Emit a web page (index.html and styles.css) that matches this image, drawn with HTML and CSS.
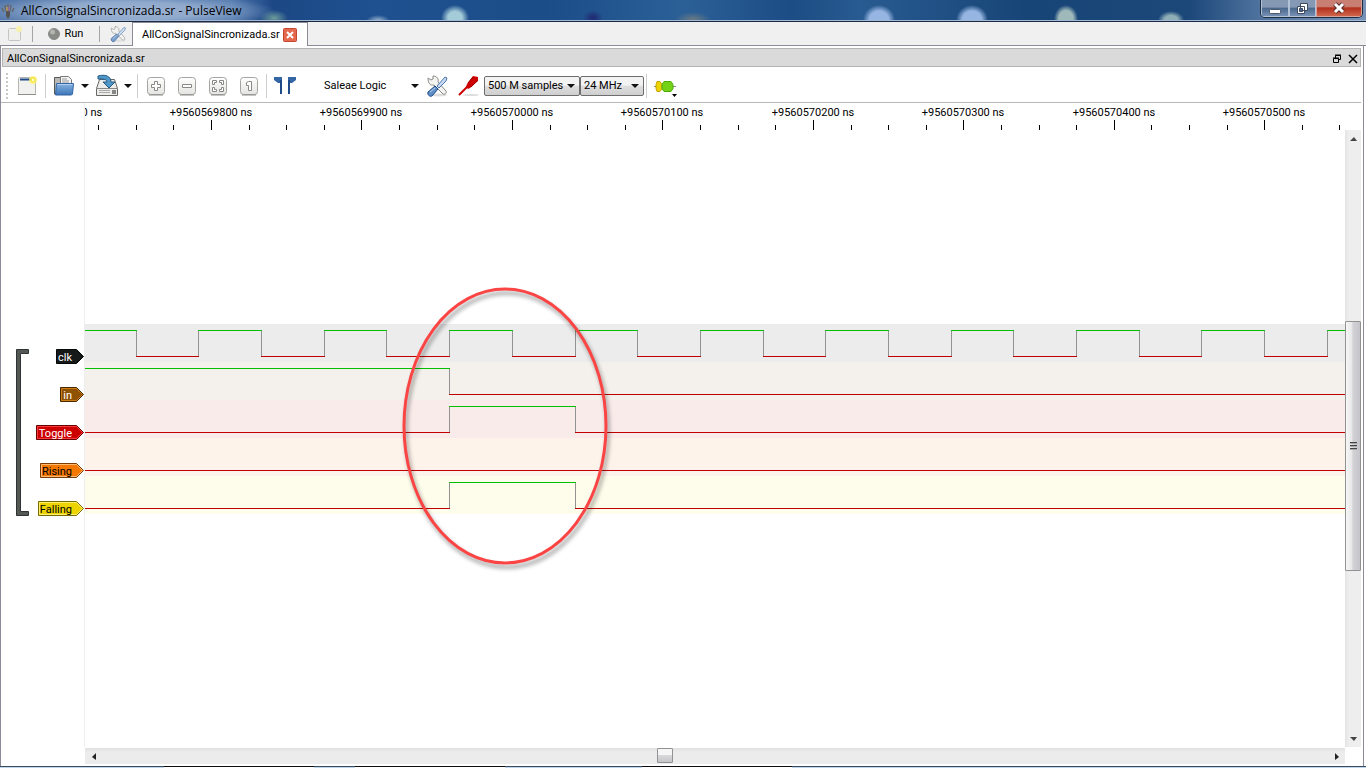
FILE: index.html
```html
<!DOCTYPE html>
<html lang="es">
<head>
<meta charset="utf-8">
<title>AllConSignalSincronizada.sr - PulseView</title>
<link rel="stylesheet" href="styles.css">
</head>
<body>
<svg class="defs" aria-hidden="true">
  <defs>
    <linearGradient id="blue" x1="0" y1="0" x2="0" y2="1"><stop offset="0" stop-color="#86b3e0"/><stop offset="1" stop-color="#3c76b8"/></linearGradient>
    <linearGradient id="key" x1="0" y1="0" x2="0" y2="1"><stop offset="0" stop-color="#fff"/><stop offset="1" stop-color="#e4e4e0"/></linearGradient>
    <symbol id="page" viewBox="0 0 24 24">
      <rect x="3.500" y="3.500" width="17" height="17" rx="1" fill="#f1f1ef" stroke="#b4b4b0"/>
      <path d="M3 20.500h18" stroke="#8d8d89"/>
      <path d="M5 5.500h13" stroke="#204a87" stroke-width="2"/>
      <circle cx="18" cy="6" r="4" fill="#fcf36a" opacity=".8"/><circle cx="18" cy="6" r="2" fill="#fffbd0" stroke="#f4e526"/>
    </symbol>
    <symbol id="page-small" viewBox="0 0 18 18">
      <rect x="3.500" y="3.500" width="12" height="12" rx="1" fill="#efefed" stroke="#9a9a96"/>
      <circle cx="14" cy="4" r="3" fill="#fcf36a"/>
    </symbol>
    <symbol id="tools" viewBox="0 0 24 24">
      <ellipse cx="13" cy="21" rx="9" ry="1.500" fill="#ddd"/>
      <path d="M3 4l3 2 2-1V2c4 0 6 3 5 6l8 9c1 2-1 4-3 3l-9-9c-4 1-6-2-6-7z" fill="#f3f3f1" stroke="#888a85"/>
      <path d="M20 3l2 1-1 3-7 7-2-2z" fill="#c9daf0" stroke="#4a76ad"/>
      <path d="M10 12l3 3-6 7c-2 1-5-1-4-4z" fill="#5f8fc8" stroke="#204a87"/>
      <path d="M5 18l5-4" stroke="#b7d0ec"/>
    </symbol>
    <symbol id="down" viewBox="0 0 8 4"><path d="M0 0h8L4 4z" fill="#111"/></symbol>
  </defs>
</svg>

<header class="titlebar">
  <svg class="app-icon" viewBox="0 0 16 16"><path d="M6 8h4v5l-2 3-2-3z" fill="#545454"/><path d="M4 9L2 5M6 8L5 2M8 8V1M10 8l1-6M12 9l2-4" stroke="#666" stroke-width="1.500"/><path d="M7 8V4" stroke="#e6b13a"/><path d="M9 8V4" stroke="#ae65bd"/></svg>
  <h1>AllConSignalSincronizada.sr - PulseView</h1>
  <div class="window-buttons">
    <button class="minimize" aria-label="Minimize"><svg width="12" height="12" viewBox="0 0 12 12"><rect x=".5" y="7.500" width="11" height="4" rx="1" fill="#fff" stroke="#4c596d"/></svg></button>
    <button class="restore" aria-label="Restore"><svg width="13" height="13" viewBox="0 0 13 13"><path d="M4.500 1.500h7v7h-7zM1.500 4.500h7v7h-7z" fill="#fff" stroke="#3d4a5f"/><path d="M3.500 6.500h3v3h-3z" fill="#46658e" stroke="#3d4a5f"/></svg></button>
    <button class="close" aria-label="Close"><svg width="14" height="12" viewBox="0 0 14 12"><path d="M3 2l8 8M11 2l-8 8" stroke="#552b2a" stroke-width="5"/><path d="M3 2l8 8M11 2l-8 8" stroke="#fff" stroke-width="3"/></svg></button>
  </div>
</header>

<nav class="sessions">
  <button class="session-new" aria-label="New session"><svg class="faded" width="18" height="18"><use href="#page-small"/></svg></button>
  <i class="sep"></i>
  <button class="run"><svg width="12" height="12" viewBox="0 0 12 12"><circle cx="6" cy="6" r="5.500" fill="#888a85" stroke="#8a8a8a"/><circle cx="4.500" cy="4" r="2.500" fill="#b4b5b1"/></svg>Run</button>
  <i class="sep"></i>
  <button class="session-settings" aria-label="Settings"><svg class="dim" width="18" height="18"><use href="#tools"/></svg></button>
  <div class="tab"><span>AllConSignalSincronizada.sr</span>
    <button aria-label="Close tab"><svg width="14" height="14" viewBox="0 0 14 14"><rect x=".5" y=".5" width="13" height="13" rx="1" fill="#e4694d" stroke="#c4472f"/><path d="M4 4l6 6M10 4l-6 6" stroke="#fff" stroke-width="2"/></svg></button>
  </div>
</nav>

<main class="session">
  <div class="dock-title">
    <h2>AllConSignalSincronizada.sr</h2>
    <button aria-label="Float"><svg width="10" height="10" viewBox="0 0 10 10"><path d="M3.500 4V1.500h5v4H7M3 1h6M1.500 4.500h5v4h-5zM1 4h6" fill="none" stroke="#000"/></svg></button>
    <button aria-label="Close"><svg width="10" height="10" viewBox="0 0 10 10"><path d="M1 1l8 8M9 1L1 9" stroke="#000" stroke-width="1.500"/></svg></button>
  </div>

  <div class="toolbar">
    <i class="handle"></i>
    <button class="wide" aria-label="New"><svg width="24" height="24"><use href="#page"/></svg></button>
    <i class="sep"></i>
    <button class="file" aria-label="Open"><svg width="24" height="24" viewBox="0 0 24 24"><path d="M2.500 20V3.500h6l1 2h9V20z" fill="#b9bab7" stroke="#555753"/><path d="M8.500 12V2.500h8l3 3V12z" fill="#f4f4f3" stroke="#777"/><path d="M10 5h5M10 7h7M10 9h7" stroke="#999"/><path d="M4.500 9.500h17l-1 10.500-1 1h-16z" fill="url(#blue)" stroke="#3465a4"/><path d="M5.500 10.500h15" stroke="#b1cfee"/></svg></button>
    <button class="arrow" aria-label="Open recent"><svg width="8" height="4"><use href="#down"/></svg></button>
    <button class="file save" aria-label="Save"><svg width="24" height="24" viewBox="0 0 24 24"><path d="M4.500 5.500h15l3 9v7h-21v-7z" fill="#ececea" stroke="#666864"/><path d="M2 14.500h20" stroke="#888"/><path d="M4 16.500h11M4 18.500h11" stroke="#aaa"/><path d="M18 16v4M20 16v4" stroke="#222"/><path d="M3 2c7-2 13 0 13 6h4l-6 6-6-6h4c0-3-4-3-9-3z" fill="#4f96c9" stroke="#245a86"/></svg></button>
    <button class="arrow" aria-label="Save options"><svg width="8" height="4"><use href="#down"/></svg></button>
    <i class="sep spaced"></i>
    <button class="zoom first" aria-label="Zoom in"><svg width="20" height="20" viewBox="0 0 20 20"><rect x="1.500" y="1.500" width="17" height="17" rx="3" fill="url(#key)" stroke="#a3a5a0"/><path d="M3 19h14" stroke="#8b8d88"/><path d="M8.500 5.500h3v3h3v3h-3v3h-3v-3h-3v-3h3z" fill="#fff" stroke="#888a85"/></svg></button>
    <button class="zoom" aria-label="Zoom out"><svg width="20" height="20" viewBox="0 0 20 20"><rect x="1.500" y="1.500" width="17" height="17" rx="3" fill="url(#key)" stroke="#a3a5a0"/><path d="M3 19h14" stroke="#8b8d88"/><path d="M5.500 8.500h9v3h-9z" fill="#fff" stroke="#888a85"/></svg></button>
    <button class="zoom" aria-label="Zoom to fit"><svg width="20" height="20" viewBox="0 0 20 20"><rect x="1.500" y="1.500" width="17" height="17" rx="3" fill="url(#key)" stroke="#a3a5a0"/><path d="M3 19h14" stroke="#8b8d88"/><path d="M4.500 4.500h4v2h-2v2h-2zM15.500 4.500h-4v2h2v2h2zM4.500 15.500h4v-2h-2v-2h-2zM15.500 15.500h-4v-2h2v-2h2z" fill="#fff" stroke="#888a85"/></svg></button>
    <button class="zoom" aria-label="Zoom one to one"><svg width="20" height="20" viewBox="0 0 20 20"><rect x="1.500" y="1.500" width="17" height="17" rx="3" fill="url(#key)" stroke="#a3a5a0"/><path d="M3 19h14" stroke="#8b8d88"/><path d="M9.500 5.500h3v9h-3v-5h-2v-3z" fill="#fff" stroke="#888a85"/></svg></button>
    <i class="sep spaced"></i>
    <button class="wide" aria-label="Show cursors"><svg width="24" height="20" viewBox="0 0 24 20"><path d="M1 1h8v17H8V7H5L1 4zM15 1h8v3l-4 3h-3v11h-1z" fill="#3465a4"/><path d="M7 4h2v14H7zM15 4h2v14h-2z" fill="#204a87"/></svg></button>
    <button class="device"><span>Saleae Logic</span><svg width="8" height="4"><use href="#down"/></svg></button>
    <button class="file" aria-label="Configure device"><svg width="24" height="24"><use href="#tools"/></svg></button>
    <button class="probe" aria-label="Configure channels"><svg width="24" height="24" viewBox="0 0 24 24"><ellipse cx="15" cy="21" rx="8" ry="1" fill="#ddd"/><path d="M3 21l10-10" stroke="#cc0000" stroke-width="2"/><path d="M17 2l5 1v4l-8 7-2 1-2-2 1-3z" fill="#cc0000"/><path d="M17 3l-5 6M21 7l-6 6" stroke="#a40000"/></svg></button>
    <div class="select samples"><select aria-label="Sample count"><option>500 M samples</option></select><svg width="8" height="4"><use href="#down"/></svg></div>
    <div class="select rate"><select aria-label="Sample rate"><option>24 MHz</option></select><svg width="8" height="4"><use href="#down"/></svg></div>
    <i class="sep spaced"></i>
    <button class="wide" aria-label="Add decoder"><svg width="24" height="24" viewBox="0 0 24 24"><path d="M1 12.500h22" stroke="#888"/><path d="M4 7.500h3l2 3v4l-2 3H4l-1-3v-4z" fill="#edd400" stroke="#c4a000"/><path d="M11 7.500h7l2 3v4l-2 3h-7l-2-3v-4z" fill="#73d216" stroke="#4eaa06"/><path d="M19 20h5l-2.500 3z" fill="#000"/></svg></button>
  </div>

  <div class="view">
    <svg class="channels" viewBox="0 0 83 645" width="83" height="645">
      <path d="M27.500 246.500h-12v166h12v-4h-8v-158h8z" fill="#555753" stroke="#2e3436"/>
      <g class="shapes">
        <path d="M55.500 246.500h20l7 7-7 7h-20z" fill="#16191a" stroke="#060808"/>
        <path d="M59.500 284.500h16l7 7-7 7h-16z" fill="#8f5202" stroke="#472901"/><path d="M60.500 285.500h15l6 6-6 6h-15z" fill="none" stroke="#cf7d12"/>
        <path d="M35.500 322.500h40l7 7-7 7h-40z" fill="#cc0000" stroke="#660000"/><path d="M36.500 323.500h39l6 6-6 6h-39z" fill="none" stroke="#ff3a3a"/>
        <path d="M39.500 360.500h36l7 7-7 7h-36z" fill="#f57900" stroke="#7a3c00"/><path d="M40.500 361.500h35l6 6-6 6h-35z" fill="none" stroke="#ffb970"/>
        <path d="M37.500 398.500h38l7 7-7 7h-38z" fill="#edd400" stroke="#766a00"/><path d="M38.500 399.500h37l6 6-6 6h-37z" fill="none" stroke="#fff06a"/>
      </g>
      <g class="names" text-anchor="end">
        <text class="light" x="71" y="258">clk</text>
        <text class="light" x="71" y="296">in</text>
        <text class="light" x="71" y="334">Toggle</text>
        <text x="71" y="372">Rising</text>
        <text x="71" y="410">Falling</text>
      </g>
    </svg>

    <div class="plot">
      <svg class="ruler">
        <path d="M13.500 22v5M51.500 22v5M88.500 22v5M126.500 17v10M164.500 22v5M201.500 22v5M239.500 22v5M276.500 17v10M314.500 22v5M352.500 22v5M389.500 22v5M427.500 17v10M465.500 22v5M502.500 22v5M540.500 22v5M577.500 17v10M615.500 22v5M653.500 22v5M690.500 22v5M728.500 17v10M766.500 22v5M803.500 22v5M841.500 22v5M878.500 17v10M916.500 22v5M954.500 22v5M991.500 22v5M1029.500 17v10M1066.500 22v5M1104.500 22v5M1142.500 22v5M1179.500 17v10M1217.500 22v5M1254.500 22v5" stroke="#000"/>
        <g text-anchor="middle">
          <text x="-24" y="13">+9560569700 ns</text>
          <text x="126" y="13">+9560569800 ns</text>
          <text x="276" y="13">+9560569900 ns</text>
          <text x="427" y="13">+9560570000 ns</text>
          <text x="577" y="13">+9560570100 ns</text>
          <text x="728" y="13">+9560570200 ns</text>
          <text x="878" y="13">+9560570300 ns</text>
          <text x="1029" y="13">+9560570400 ns</text>
          <text x="1179" y="13">+9560570500 ns</text>
        </g>
      </svg>
      <svg class="traces">
        <g class="bands">
          <rect y="194" width="100%" height="38" fill="#ececec"/>
          <rect y="232" width="100%" height="38" fill="#f4f0eb"/>
          <rect y="270" width="100%" height="38" fill="#faebeb"/>
          <rect y="308" width="100%" height="38" fill="#fef3eb"/>
          <rect y="346" width="100%" height="38" fill="#fefdeb"/>
        </g>
        <path class="edge" d="M51.500 200v27M113.500 200v27M176.500 200v27M239.500 200v27M301.500 200v27M364.500 200v27M427.500 200v27M490.500 200v27M552.500 200v27M615.500 200v27M678.500 200v27M740.500 200v27M803.500 200v27M866.500 200v27M928.500 200v27M991.500 200v27M1054.500 200v27M1116.500 200v27M1179.500 200v27M1242.500 200v27M364.500 238v27M364.500 276v27M490.500 276v27M364.500 352v27M490.500 352v27"/>
        <path class="high" d="M0 200.500h52M113 200.500h64M239 200.500h63M364 200.500h64M490 200.500h63M615 200.500h64M740 200.500h64M866 200.500h63M991 200.500h64M1116 200.500h64M1242 200.500h4000M0 238.500h365M364 276.500h127M364 352.500h127"/>
        <path class="low" d="M51 226.500h63M176 226.500h64M301 226.500h64M427 226.500h64M552 226.500h64M678 226.500h63M803 226.500h64M928 226.500h64M1054 226.500h63M1179 226.500h64M364 264.500h4000M0 302.500h365M490 302.500h4000M0 340.500h4000M0 378.500h365M490 378.500h4000"/>
        <ellipse class="mark" cx="420" cy="296" rx="101" ry="137"/>
      </svg>
    </div>

    <div class="vscroll">
      <button aria-label="Scroll up"><svg width="7" height="4" viewBox="0 0 7 4"><path d="M0 4h7L4 0z" fill="#444"/></svg></button>
      <div class="track"><div class="thumb"><svg width="7" height="8" viewBox="0 0 7 8"><path d="M0 .5h7M0 3.500h7M0 6.500h7" stroke="#444"/><path d="M0 1.500h7M0 4.500h7M0 7.500h7" stroke="#aaa"/></svg></div></div>
      <button aria-label="Scroll down"><svg width="7" height="4" viewBox="0 0 7 4"><path d="M0 0h7L4 4z" fill="#444"/></svg></button>
    </div>

    <div class="hscroll">
      <button aria-label="Scroll left"><svg width="4" height="7" viewBox="0 0 4 7"><path d="M4 0v7L0 4z" fill="#222"/></svg></button>
      <div class="track"><div class="thumb"></div></div>
      <button aria-label="Scroll right"><svg width="4" height="7" viewBox="0 0 4 7"><path d="M0 0v7l4-3z" fill="#222"/></svg></button>
    </div>
  </div>
</main>
<footer class="taskbar-edge"></footer>
</body>
</html>
```
FILE: styles.css
```css
* { box-sizing: border-box; }

html { height: 100%; }

body {
  height: 100%;
  margin: 0;
  display: flex;
  flex-direction: column;
  overflow: hidden;
  background: #fff;
  color: #000;
  font-family: Roboto, "Liberation Sans", sans-serif;
  font-size: 11px;
  line-height: 14px;
}

h1, h2 { margin: 0; font: inherit; }

button, select {
  margin: 0;
  padding: 0;
  border: 0;
  background: none;
  color: inherit;
  font: inherit;
}

button {
  display: flex;
  align-items: center;
  justify-content: center;
  flex: none;
}

svg { display: block; flex: none; }

.defs { position: absolute; width: 0; height: 0; }

.titlebar {
  flex: none;
  height: 22px;
  display: flex;
  align-items: flex-start;
  border-bottom: 1px solid #1b2a44;
  box-shadow: inset 0 -1px #a3b8d2;
  background:
    radial-gradient(ellipse 150px 18px at 126px 11px, #9fb5d4 0, #8fa9cc 50%, transparent 100%),
    radial-gradient(ellipse 14px 8px at 274px 18px, #6f9d9a, transparent),
    radial-gradient(ellipse 14px 13px at 455px 18px, #a4cbd8 50%, transparent),
    radial-gradient(ellipse 12px 6px at 378px 21px, #a5bfd4, transparent),
    radial-gradient(ellipse 10px 8px at 593px 18px, #202f78 20%, transparent),
    radial-gradient(ellipse 18px 8px at 693px 20px, #6f7b82, transparent),
    radial-gradient(ellipse 16px 15px at 879px 20px, #96b5e2 60%, transparent),
    radial-gradient(ellipse 16px 15px at 972px 20px, #96b5e2 60%, transparent),
    radial-gradient(ellipse 12px 14px at 1066px 19px, #9fb9bb 60%, transparent),
    radial-gradient(ellipse 13px 9px at 1171px 20px, #8faeb6 50%, transparent),
    linear-gradient(90deg, #4f74a8 0, #4d75ac 17%, #1c4885 20%, #1f5190 28%, #1b4d88 40%, #2b6097 50%, #1c4d84 58%, #285b91 63%, #184577 75%, #1b4779 87%, #4d719d 92%, #7792b6 100%);
}

.app-icon { width: 16px; height: 16px; margin: 3px 5px 0 0; }

.titlebar h1 {
  flex: 1;
  padding-top: 2px;
  font-family: "Open Sans", "Noto Sans", sans-serif;
  font-size: 12px;
  line-height: 17px;
}

.window-buttons {
  display: flex;
  height: 18px;
  margin-right: 3px;
  border: 1px solid #1f2c40;
  border-top: 0;
  border-radius: 0 0 5px 5px;
  overflow: hidden;
}

.window-buttons button {
  height: 17px;
  border: 1px solid #b2c2d6;
  border-top: 0;
  background: linear-gradient(#8599b4 0 45%, #4a678d 50%, #7590b3);
}

.window-buttons .minimize { width: 28px; }
.window-buttons .restore { width: 27px; }
.window-buttons .close { width: 46px; border-color: #d7a29c; background: linear-gradient(#c87e73 0 40%, #b3301d 50%, #d0644b); }

.sessions {
  flex: none;
  height: 24px;
  display: flex;
  align-items: center;
  background: #f0f0f0;
  border-bottom: 1px solid #8a8a98;
}

.session-new { width: 32px; padding-right: 4px; }
.sessions .sep { height: 16px; background: #a5a5a5; }
.run { width: 66px; padding-right: 1px; gap: 5px; }
.session-settings { width: 32px; padding-left: 4px; }
.faded { opacity: .5; }
.dim { opacity: .8; }
.sep { flex: none; width: 1px; height: 24px; background: #cfcfcf; }
.sep.spaced { margin-left: 2px; }

.tab {
  display: flex;
  align-items: center;
  align-self: stretch;
  gap: 3px;
  margin-bottom: -1px;
  padding: 0 10px 0 9px;
  border: 1px solid #8a8a98;
  border-bottom: 0;
  background: #fff;
}

.session {
  flex: 1;
  min-height: 0;
  display: flex;
  flex-direction: column;
  margin-right: 2px;
  padding: 2px 2px 2px 0;
  border: solid #8a8a98;
  border-width: 0 1px;
}

.dock-title {
  flex: none;
  height: 19px;
  display: flex;
  align-items: center;
  gap: 6px;
  margin-left: 1px;
  padding: 2px 2px 0 4px;
  border: 1px solid #b4b4b4;
  background: #dadada;
}

.dock-title h2 { flex: 1; }

.toolbar {
  flex: none;
  height: 36px;
  display: flex;
  align-items: center;
  padding-top: 2px;
  border-bottom: 1px solid #b8b8b8;
}

.handle { width: 2px; height: 26px; margin: 0 1px 0 5px; background: repeating-linear-gradient(#c8c8c8 0 2px, transparent 2px 4px); }
.wide { width: 36px; }
.file { width: 28px; }
.sep + .file { margin-left: 4px; }
.save { margin-left: 1px; }
.arrow { width: 14px; }
.zoom { width: 31px; }
.zoom.first { margin-left: 2px; }
.device { width: 120px; justify-content: space-between; padding: 0 4px 0 21px; }
.probe { width: 33px; }

.select {
  display: grid;
  align-items: center;
  height: 20px;
  border: 1px solid #6e6e6e;
  border-radius: 2px;
  background: linear-gradient(#f3f3f3 0 45%, #dedede 50%, #cfcfcf);
}

.select select { grid-area: 1 / 1; width: 100%; padding-left: 3px; appearance: none; }
.select svg { grid-area: 1 / 1; justify-self: end; margin-right: 4px; pointer-events: none; }
.samples { width: 96px; }
.rate { width: 64px; }

.view {
  flex: 1;
  min-height: 0;
  display: grid;
  grid-template-columns: 83px 1fr 16px;
  grid-template-rows: 1fr 17px;
}

.channels { grid-area: 1 / 1 / 3 / 2; }
.light { fill: #fff; }

.plot {
  display: flex;
  flex-direction: column;
  min-width: 0;
  border-left: 1px solid #eee;
}

.ruler { width: 100%; height: 27px; }
.traces { width: 100%; flex: 1; min-height: 0; }
.edge { stroke: #929292; fill: none; }
.high { stroke: #00c000; fill: none; }
.low { stroke: #c00000; fill: none; }
.mark { fill: none; stroke: #fb4545; stroke-width: 3px; filter: drop-shadow(2px 4px 2px rgba(0, 0, 0, .4)); }

.vscroll {
  display: flex;
  flex-direction: column;
  margin-top: 27px;
  background: linear-gradient(90deg, #e4e4e4, #eee 4px, #eee);
}

.vscroll > button { height: 17px; }

.track { flex: 1; min-width: 0; min-height: 0; }

.thumb { border: 1px solid #929292; border-radius: 1px; }

.vscroll .track { padding-top: 174px; }

.vscroll .thumb {
  display: flex;
  align-items: center;
  justify-content: center;
  height: 43%;
  min-height: 250px;
  background: linear-gradient(90deg, #f7f7f7, #e8e8ea 40%, #d2d2d6 50%, #c4c4ca);
}

.hscroll {
  grid-column: 2;
  display: flex;
  margin: 1px 0 0 1px;
  background: linear-gradient(#e0e0e0, #ececec 4px);
}

.hscroll button { width: 17px; }
.hscroll .track { display: flex; padding-left: 555px; }
.hscroll .thumb { width: 16px; height: 15px; background: linear-gradient(#f5f5f5 0 45%, #d8d8da 50%, #c6c6ca); }

.taskbar-edge {
  flex: none;
  height: 2px;
  background:
    linear-gradient(90deg, #3b4c60 12%, #0b0d10 12% 23%, #3b4c60 23% 26%, #0b0d10 26% 37%, #3b4c60 37% 47%, #0b0d10 47% 58%, #3b4c60 58%) top / 100% 1px no-repeat,
    linear-gradient(90deg, #bfd5ea 12%, #fff 12% 23%, #bfd5ea 23% 26%, #fff 26% 37%, #bfd5ea 37% 47%, #fff 47% 58%, #bfd5ea 58%);
}
```
